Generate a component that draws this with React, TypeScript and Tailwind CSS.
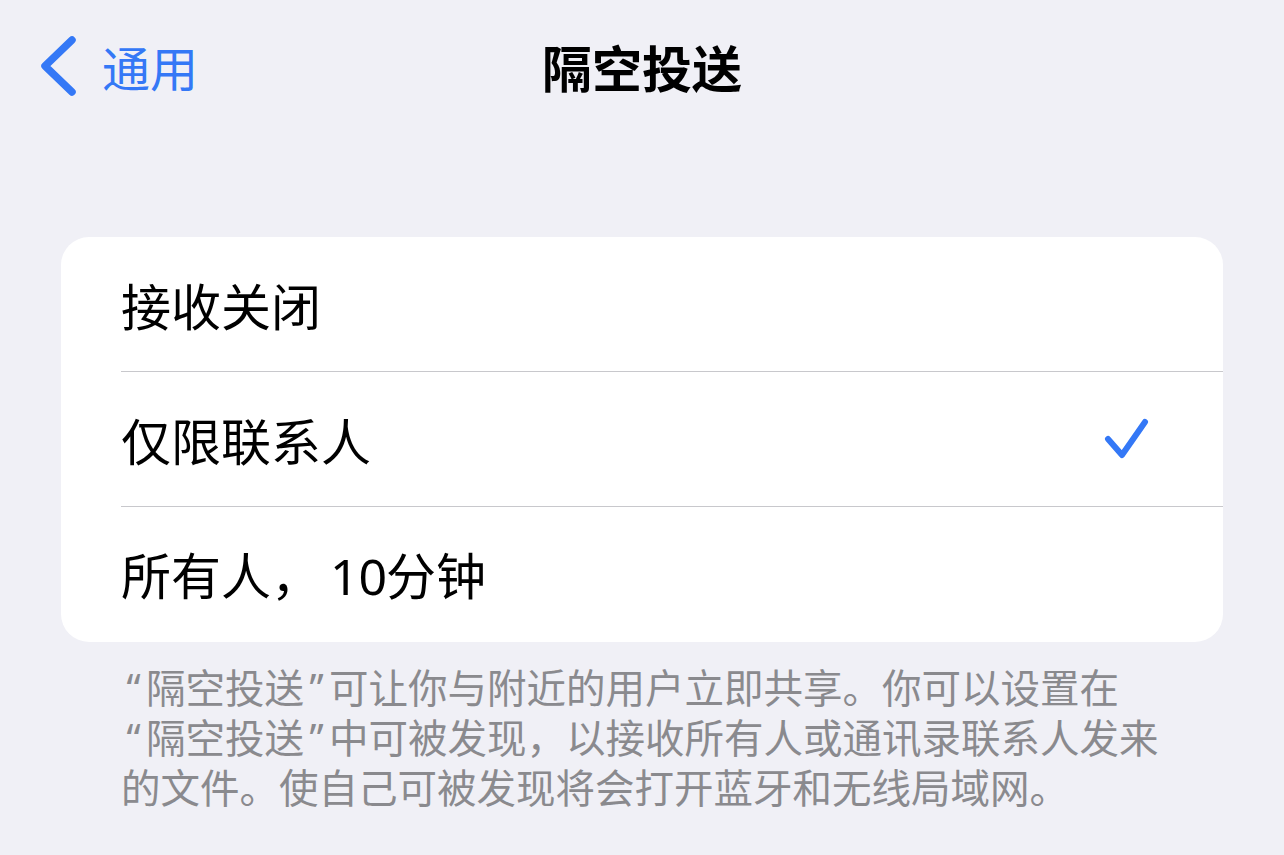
import type { ReactNode } from 'react'

const font = { fontFamily: '"Noto Sans CJK SC", "Noto Sans", sans-serif' }
const latin = { fontFamily: '"Noto Sans", "Liberation Sans", sans-serif' }

function Row({ children, checked, last }: { children: ReactNode; checked?: boolean; last?: boolean }) {
  return (
    <div className="pl-[60px]">
      <div className={`flex h-[135px] items-center justify-between pr-[72px] ${last ? '' : 'border-b border-[#c8c8cc]'}`}>
        <span className="whitespace-nowrap text-[50px] leading-none text-black">{children}</span>
        {checked && (
          <svg width="48" height="44" viewBox="0 0 48 44" fill="none">
            <path d="M5 22 L19 38 L42 5" stroke="#3478f6" strokeWidth="6" strokeLinecap="round" strokeLinejoin="round" />
          </svg>
        )}
      </div>
    </div>
  )
}

// proportional curly quotes, like the system font draws them
function Q({ c }: { c: string }) {
  return (
    <span className="inline-block w-[25px] text-center" style={latin}>
      {c}
    </span>
  )
}

export default function App() {
  return (
    <div className="h-[855px] w-full bg-[#f0f0f6]" style={font}>
      {/* nav bar */}
      <div className="relative flex h-[132px] items-center justify-center">
        <div className="absolute left-[36px] top-0 flex h-full items-center gap-[22px]">
          <svg width="44" height="62" viewBox="0 0 44 62" fill="none">
            <path d="M36 5 L9 31 L36 57" stroke="#3478f6" strokeWidth="7.5" strokeLinecap="round" strokeLinejoin="round" />
          </svg>
          <span className="text-[48px] leading-none text-[#3478f6]">通用</span>
        </div>
        <span className="text-[50px] font-bold leading-none text-black">隔空投送</span>
      </div>

      {/* options */}
      <div className="mx-[61px] mt-[105px] overflow-hidden rounded-[28px] bg-white">
        <Row>接收关闭</Row>
        <Row checked>仅限联系人</Row>
        <Row last>
          所有人
          <span className="inline-block w-[50px]">，</span>
          <span className="inline-block w-[65px] pl-[9px]" style={latin}>
            10
          </span>
          分钟
        </Row>
      </div>

      <div className="mt-[20px] whitespace-nowrap pl-[121px] text-[39.5px] leading-[48px] text-[#8a8a8e]">
        <div>
          <Q c="“" />隔空投送<Q c="”" />可让你与附近的用户立即共享。你可以设置在
        </div>
        <div>
          <Q c="“" />隔空投送<Q c="”" />中可被发现，以接收所有人或通讯录联系人发来
        </div>
        <div>的文件。使自己可被发现将会打开蓝牙和无线局域网。</div>
      </div>
    </div>
  )
}
